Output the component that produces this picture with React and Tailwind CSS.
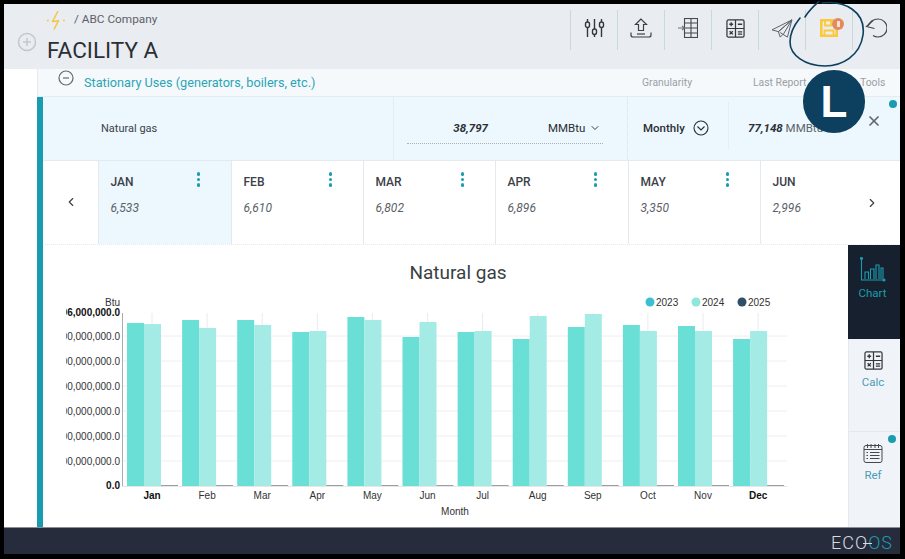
import { ChevronDown, ChevronLeft, ChevronRight, X } from "lucide-react";

const MONTHS = [
  { name: "JAN", value: "6,533", width: "w-[133px]", active: true },
  { name: "FEB", value: "6,610", width: "w-[132px]" },
  { name: "MAR", value: "6,802", width: "w-[132px]" },
  { name: "APR", value: "6,896", width: "w-[133px]" },
  { name: "MAY", value: "3,350", width: "w-[132px]" },
  { name: "JUN", value: "2,996", width: "w-[85px]", clipped: true },
];

const LABELS = ["Jan", "Feb", "Mar", "Apr", "May", "Jun", "Jul", "Aug", "Sep", "Oct", "Nov", "Dec"];
const TOPS_2023 = [323, 320, 320, 332, 317, 337, 332, 339, 327, 325, 326, 339];
const TOPS_2024 = [324, 328, 325, 331, 320, 322, 331, 316, 314, 331, 331, 331];
const GRID = [336, 361, 386, 411, 436, 461];
const STEP = 55.1;

const FONT = "Roboto, 'Liberation Sans', sans-serif";
const ARIAL = "'Liberation Sans', Arial, sans-serif";

const Cell = ({ children }) => (
  <div className="w-[47px] h-[40px] pb-[4px] flex items-center justify-center border-l border-[#c9d8da]">
    {children}
  </div>
);

const SlidersIcon = () => (
  <svg width="21" height="20" viewBox="0 0 21 20" fill="none" stroke="#33383e" strokeWidth="1.4">
    <path d="M3.5 1v18M10.5 1v18M17.5 1v18" />
    <rect x="1.5" y="4" width="4" height="5.5" rx="2" fill="#e9ecf0" />
    <rect x="8.5" y="11" width="4" height="5.5" rx="2" fill="#e9ecf0" />
    <rect x="15.5" y="4" width="4" height="5.5" rx="2" fill="#e9ecf0" />
  </svg>
);

const UploadIcon = () => (
  <svg width="22" height="20" viewBox="0 0 22 20" fill="none" stroke="#3c4148" strokeWidth="1.2">
    <path d="M11 1L5.5 6.5h3v6h5v-6h3z" />
    <path d="M1 14.5v2.5a2 2 0 0 0 2 2h16a2 2 0 0 0 2-2v-2.5" />
    <path d="M7 16h8" />
  </svg>
);

const ImportIcon = () => (
  <svg width="20" height="20" viewBox="0 0 20 20" fill="none" stroke="#44494f" strokeWidth="1.1">
    <rect x="6.5" y="0.5" width="13" height="19" />
    <path d="M13 0.5v19M6.5 5h13M6.5 10h13M6.5 15h13" />
    <path d="M0 10h6M4 8l2.5 2L4 12" stroke="#6f767d" />
  </svg>
);

const CalcIcon = () => (
  <svg width="19" height="19" viewBox="0 0 20 20" fill="none" stroke="#33383e" strokeWidth="1.3">
    <rect x="1" y="1" width="18" height="18" rx="1.5" />
    <path d="M10 1v18M1 10h18" />
    <path d="M3.5 5.5h4M5.5 3.5v4M12.5 5.5h4.5M3.8 12.8l3.4 3.4M7.2 12.8l-3.4 3.4M12.5 13.5h4.5M12.5 16h4.5" strokeWidth="1.4" />
  </svg>
);

const PlaneIcon = () => (
  <svg width="22" height="19" viewBox="0 0 24 21" fill="none" stroke="#5c6269" strokeWidth="1.1" strokeLinejoin="round">
    <path d="M23 1L1 12l7 2zM23 1L8 14l2 6 4-4zM23 1l-5 19-8-5" />
  </svg>
);

const SaveIcon = () => (
  <div className="relative w-[18px] h-[18px]">
    <svg width="18" height="18" viewBox="0 0 18 18" fill="none" stroke="#fbc93a" strokeWidth="2.6">
      <path d="M1.3 1.3h11.5l3.9 3.9v11.5H1.3z" />
      <path d="M5 1.5v5h6v-5M4.5 16.5v-5h9v5" strokeWidth="1.8" />
    </svg>
    <span className="absolute -top-[1px] -right-[6px] w-[12px] h-[12px] rounded-full bg-[#e58a5d] flex items-center justify-center">
      <span className="w-[3px] h-[6px] bg-[#f6e3d6]" />
    </span>
  </div>
);

const UndoIcon = () => (
  <svg width="22" height="20" viewBox="0 0 22 20" fill="none" stroke="#44494f" strokeWidth="1.2">
    <path d="M3 8C5 3.5 9 1 13 1a9 9 0 0 1 0 18c-2 0-3.5-.5-5-1.5" />
    <path d="M8 2.5L1.5 8.5 9.5 10.5" />
  </svg>
);

const ChartIcon = () => (
  <svg width="26" height="25" viewBox="0 0 26 25" fill="none" stroke="#1a9cb0" strokeWidth="1.1">
    <path d="M1.5 1v22h23" />
    <circle cx="1.5" cy="1.5" r="1" fill="#1a9cb0" />
    <circle cx="24" cy="23" r="1" fill="#1a9cb0" />
    <path d="M5 22v-7h3.5v7M10.5 22V12H14v10M16 22V8h3v14M21 22V11h2v11" />
  </svg>
);

const NotebookIcon = () => (
  <svg width="20" height="20" viewBox="0 0 20 20" fill="none" stroke="#44494f" strokeWidth="1">
    <rect x="1" y="2.5" width="18" height="17" rx="2" />
    <path d="M1 6.5h18M4.5 1v4M8 1v4M12 1v4M15.5 1v4" />
    <path d="M3.5 9.5h1.5M7 9.5h9.5M3.5 12.5h1.5M7 12.5h9.5M3.5 15.5h1.5M7 15.5h9.5" strokeWidth="1.2" />
  </svg>
);

const Chart = () => (
  <svg width="805" height="282" viewBox="43 245 805 282" className="block">
    <defs>
      <clipPath id="ylabels">
        <rect x="66" y="295" width="60" height="200" />
      </clipPath>
    </defs>
    <text x="458" y="279" textAnchor="middle" fontSize="19" fill="#3a3f44" fontFamily={FONT}>
      Natural gas
    </text>
    {GRID.map((y) => (
      <line key={y} x1="122" x2="787" y1={y} y2={y} stroke="#eeeeee" />
    ))}
    {LABELS.map((_, i) => (
      <line key={i} x1={152 + i * STEP} x2={152 + i * STEP} y1="313" y2="486" stroke="#ebebeb" />
    ))}
    {TOPS_2023.map((top, i) => (
      <g key={i}>
        <rect x={127 + i * STEP} y={top} width="17" height={486 - top} fill="#69dfd6" />
        <rect x={144 + i * STEP} y={TOPS_2024[i]} width="17" height={486 - TOPS_2024[i]} fill="#a5ebe5" />
        <rect x={161 + i * STEP} y="485" width="17" height="1" fill="#9a9fa5" />
      </g>
    ))}
    <line x1="122.5" x2="122.5" y1="313" y2="486" stroke="#a9adb2" />
    <line x1="122" x2="787" y1="486.5" y2="486.5" stroke="#e4e6e8" />
    <g fontFamily={ARIAL} fontSize="10" fill="#333" clipPath="url(#ylabels)">
      <text x="120" y="306" textAnchor="end">Btu</text>
      <text x="120" y="316" textAnchor="end" fontWeight="700" fill="#111">396,000,000.0</text>
      {GRID.map((y) => (
        <text key={y} x="120" y={y + 3.5} textAnchor="end">100,000,000.0</text>
      ))}
      <text x="120" y="489" textAnchor="end" fontWeight="700" fill="#111">0.0</text>
    </g>
    <g fontFamily={ARIAL} fontSize="10" fill="#333">
      {LABELS.map((m, i) => (
        <text
          key={m}
          x={152 + i * STEP}
          y="499"
          textAnchor="middle"
          fontWeight={m === "Jan" || m === "Dec" ? 700 : 400}
          fill={m === "Jan" || m === "Dec" ? "#111" : "#333"}
        >
          {m}
        </text>
      ))}
      <text x="455" y="515" textAnchor="middle">Month</text>
      <circle cx="650" cy="302" r="4.5" fill="#3dbfd0" />
      <text x="656" y="305.5">2023</text>
      <circle cx="696" cy="302" r="4.5" fill="#8fe6dc" />
      <text x="702" y="305.5">2024</text>
      <circle cx="742" cy="302" r="4.5" fill="#2f4f68" />
      <text x="748" y="305.5">2025</text>
    </g>
  </svg>
);

export default function App() {
  return (
    <div className="relative w-[905px] h-[559px] bg-black pt-[4px] pl-[4px] pr-[5px] pb-[5px] flex flex-col overflow-hidden" style={{ fontFamily: FONT }}>
      {/* top header */}
      <header className="h-[65px] shrink-0 bg-[#e9ecf0] flex">
        <div className="w-[43px] flex items-end pb-[17px] pl-[13px]">
          <svg width="20" height="20" viewBox="0 0 20 20" fill="none" stroke="#c3c8cc" strokeWidth="1.5">
            <circle cx="10" cy="10" r="8.5" />
            <path d="M10 6v8M6 10h8" />
          </svg>
        </div>
        <div className="flex-1 pt-[6px]">
          <div className="flex items-center gap-[8px] h-[20px]">
            <svg width="19" height="20" viewBox="0 0 19 20" fill="none" stroke="#f7c63e" strokeWidth="1.5" strokeLinejoin="round">
              <path d="M11 1L5.5 11.5l6-.8L7 19.5" />
              <path d="M0 10.5h1.8M16 10.5h1.8" />
            </svg>
            <span className="text-[11.8px] text-[#5c6269]">/ ABC Company</span>
          </div>
          <div className="text-[22.5px] leading-[30px] mt-[5px] text-[#2b2f35]">FACILITY A</div>
        </div>
        <div className="flex items-center pb-[13px] pr-[1px]">
          <Cell><SlidersIcon /></Cell>
          <Cell><UploadIcon /></Cell>
          <Cell><ImportIcon /></Cell>
          <Cell><CalcIcon /></Cell>
          <Cell><PlaneIcon /></Cell>
          <Cell><SaveIcon /></Cell>
          <Cell><UndoIcon /></Cell>
        </div>
      </header>

      <div className="flex-1 flex min-h-0 bg-white">
        <div className="w-[33px] shrink-0 bg-white" />
        <div className="flex-1 min-w-0 flex flex-col">
          {/* section title */}
          <div className="h-[28px] shrink-0 bg-[#f5f9fc] border-b border-l border-[#e6ebef] flex items-center text-[10.4px] text-[#9aa0a5]">
            <svg className="ml-[20px] -mt-[9px]" width="16" height="16" viewBox="0 0 16 16" fill="none" stroke="#62686e" strokeWidth="1.2">
              <circle cx="8" cy="8" r="7" />
              <path d="M5 8h6" />
            </svg>
            <span className="ml-[10px] w-[233px] whitespace-nowrap text-[12.7px] text-[#2aa5b5]">Stationary Uses (generators, boilers, etc.)</span>
            <span className="ml-[325px] w-[50px] whitespace-nowrap">Granularity</span>
            <span className="ml-[61px] w-[107px] whitespace-nowrap">Last Report</span>
            <span>Tools</span>
          </div>

          <div className="flex-1 min-h-0 flex border-l-[6px] border-[#1a9cb0]">
            <div className="flex-1 min-w-0 flex flex-col">
              {/* fuel row */}
              <div className="h-[64px] shrink-0 bg-[#ecf7fe] flex border-b border-[#e3e9ee]">
                <div className="w-[350px] pl-[58px] pt-[25px] text-[11px] text-[#3c4148] leading-[14px]">Natural gas</div>
                <div className="w-[234px] border-l border-[#e3edf2] pl-[13px] pt-[24px]">
                  <div className="w-[196px] h-[23px] flex items-start border-b border-dotted border-[#a9aeb3] text-[11.5px] leading-[14px] text-[#2b2f35]">
                    <span className="w-[81px] text-right italic font-bold">38,797</span>
                    <span className="ml-[60px] w-[37px] whitespace-nowrap">MMBtu</span>
                    <ChevronDown className="w-[12px] h-[12px] ml-[4px] mt-[1px] text-[#3c4148]" />
                  </div>
                </div>
                <div className="w-[101px] border-l border-dotted border-[#d8e2e8] pl-[15px] pt-[23px] flex items-start gap-[8px] text-[11.5px] font-medium text-[#2b2f35] leading-[16px]">
                  <span>Monthly</span>
                  <svg width="16" height="16" viewBox="0 0 16 16" fill="none" stroke="#2b2f35" strokeWidth="1.1">
                    <circle cx="8" cy="8" r="7" />
                    <path d="M4.5 6.5L8 10l3.5-3.5" />
                  </svg>
                </div>
                <div className="flex-1 pt-[5px]">
                  <div className="h-[47px] border-l border-[#e3edf2] pl-[19px] pt-[19px] text-[11.5px] leading-[14px] text-[#5c6269] whitespace-nowrap">
                    <span className="italic font-bold text-[#2b2f35]">77,148</span> MMBtu
                  </div>
                </div>
              </div>

              {/* months */}
              <div className="h-[84px] shrink-0 bg-white flex border-b border-dotted border-[#e6eaee]">
                <div className="w-[55px] flex items-center justify-center pb-[2px]">
                  <ChevronLeft className="w-[14px] h-[14px] text-[#3c4148]" />
                </div>
                {MONTHS.map((m) => (
                  <div
                    key={m.name}
                    className={`${m.width} shrink-0 border-l border-[#e3e9ee] pt-[14px] pl-[11.5px] relative ${m.active ? "bg-[#ecf7fe]" : ""}`}
                  >
                    <div className="text-[12px] leading-[14px] font-medium text-[#3c4148]">{m.name}</div>
                    <div className="mt-[12px] text-[12px] leading-[14px] italic text-[#5c6269]">{m.value}</div>
                    {!m.clipped && (
                      <div className="absolute top-[11px] right-[31px] flex flex-col gap-[2px]">
                        <span className="w-[3.5px] h-[3.5px] rounded-full bg-[#1a9cb0]" />
                        <span className="w-[3.5px] h-[3.5px] rounded-full bg-[#1a9cb0]" />
                        <span className="w-[3.5px] h-[3.5px] rounded-full bg-[#1a9cb0]" />
                      </div>
                    )}
                  </div>
                ))}
              </div>

              <div className="flex-1 min-h-0 overflow-hidden bg-white">
                <Chart />
              </div>
            </div>
          </div>
        </div>
      </div>

      <footer className="h-[27px] shrink-0 bg-[#272c3c] border-t border-[#8a8f97]" />

      {/* side tabs sit over the end of the chart column */}
      <aside className="absolute left-[848px] top-[245px] w-[52px] h-[282px] bg-[#f0f4f9] flex flex-col text-[11.5px]">
        <div className="h-[94px] bg-[#17202e] flex flex-col items-center pt-[12px] pr-[3px] text-[#1a9cb0]">
          <ChartIcon />
          <span className="mt-[4px] leading-[14px]">Chart</span>
        </div>
        <div className="h-[93px] flex flex-col items-center pt-[12px] pr-[3px] text-[#4a9db5] border-b border-l border-[#e3e9ee]">
          <CalcIcon />
          <span className="mt-[5px] leading-[14px]">Calc</span>
        </div>
        <div className="flex-1 flex flex-col items-center pt-[11px] pr-[3px] text-[#4a9db5] border-l border-[#e3e9ee]">
          <NotebookIcon />
          <span className="mt-[5px] leading-[14px]">Ref</span>
        </div>
      </aside>

      {/* overlays */}
      <span className="absolute left-[889px] top-[100px] w-[8px] h-[8px] rounded-full bg-[#1a9cb0]" />
      <span className="absolute left-[888px] top-[435px] w-[8px] h-[8px] rounded-full bg-[#1a9cb0]" />
      <div className="absolute left-[803px] top-[70px] w-[62px] h-[63px] rounded-full bg-[#0d3f5f] flex items-center justify-center text-white text-[44px] font-bold leading-none" style={{ fontFamily: ARIAL }}>
        L
      </div>
      <X className="absolute left-[866px] top-[113px] w-[16px] h-[16px] text-[#62686e]" strokeWidth={2.6} />
      <svg className="absolute left-[785px] top-[0px]" width="85" height="70" viewBox="785 0 85 70" fill="none" stroke="#0d3f5f" strokeWidth="1.6" strokeLinecap="round">
        <path d="M805 17C810 9 815 5 819 1.5" />
        <path d="M822 3C845 0 866 12 863 35C860 56 842 66 825 66C805 66 790 55 790 42C790 32 795 24 800 18" />
      </svg>
      <div className="absolute left-[831px] top-[533px] text-[18px] leading-[20px] tracking-[1px] text-[#d7dbe0] font-light whitespace-nowrap">
        ECO<span className="text-[#1a9cb0]">OS</span>
      </div>
      <span className="absolute left-[863px] top-[543px] w-[9px] h-[1px] bg-[#d7dbe0]" />
      <ChevronRight className="absolute left-[865px] top-[196px] w-[14px] h-[14px] text-[#3c4148]" />
    </div>
  );
}
